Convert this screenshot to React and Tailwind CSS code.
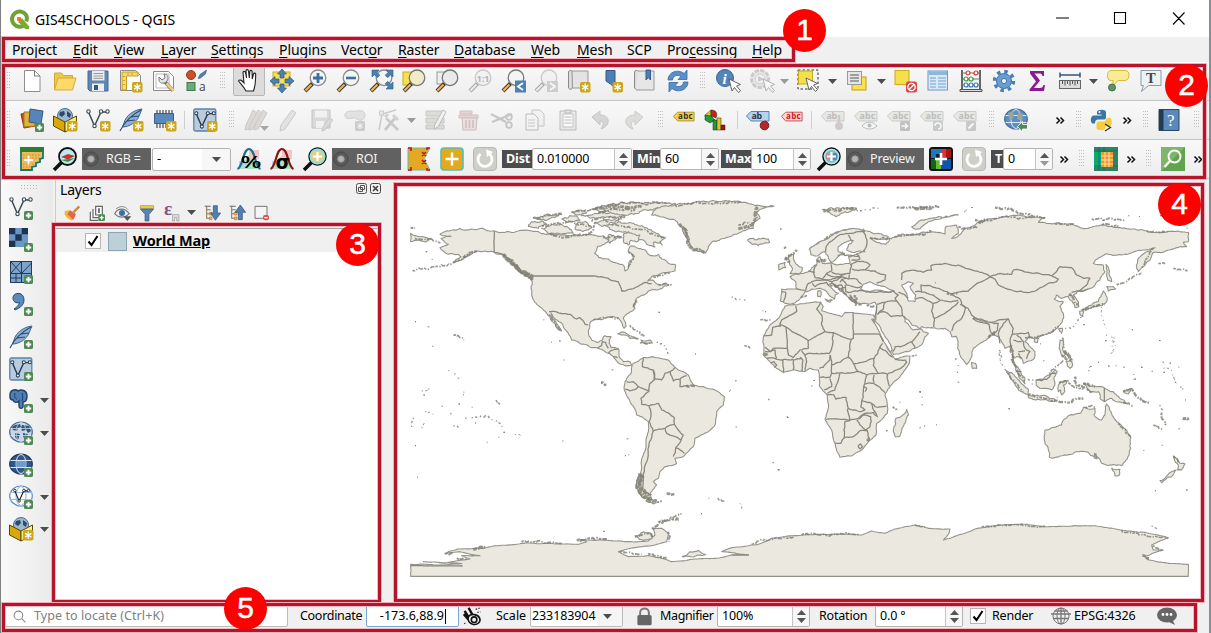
import React from "react";

/* ---------- shared pieces ---------- */
const I = ({ children, c = "size-6", o }) => (
  <svg viewBox="0 0 24 24" className={"shrink-0 overflow-visible " + c} fill="none" opacity={o}>{children}</svg>
);
const Cell = ({ w = "w-[33px]", children }) => <div className={"flex h-full shrink-0 items-center justify-center " + w}>{children}</div>;
const Grip = ({ w = "w-[16px]" }) => (
  <Cell w={w}>
    <svg viewBox="0 0 6 18" className="h-[18px] w-[6px]" fill="#c0c0c0">
      {[0, 3, 6, 9, 12, 15].map((y) => <g key={y}><rect x="0" y={y} width="1" height="1" /><rect x="2" y={y} width="1" height="1" /><rect x="4" y={y} width="1" height="1" /></g>)}
    </svg>
  </Cell>
);
const Sep = ({ w = "w-[7px]" }) => <Cell w={w}><div className="h-[18px] w-px bg-[#cfcfcf]" /></Cell>;
const Tri = ({ f = "#4d4d4d" }) => <svg viewBox="0 0 9 5" className="h-[5px] w-[9px] shrink-0"><path d="M0 0h9L4.500 5z" fill={f} /></svg>;
const More = ({ w = "w-[20px]" }) => (
  <Cell w={w}><svg viewBox="0 0 8 7" className="h-[7px] w-[8px] overflow-visible" fill="none" stroke="#111" strokeWidth="1.500"><path d="M.5 .5l3 3-3 3M4.500 .5l3 3-3 3" /></svg></Cell>
);
const Star = ({ x = 13, y = 13 }) => (
  <g transform={`translate(${x} ${y})`}><rect width="10.500" height="10.500" rx="1.800" fill="#cda61c" /><path d="M5.200 1.600v7.300M2 3.400l6.400 3.700M2 7.100l6.400-3.700" stroke="#fff" strokeWidth="1.300" /></g>
);
const Plus = ({ x = 15, y = 15 }) => (
  <g transform={`translate(${x} ${y})`}><rect width="9" height="9" rx="1.600" fill="#4f8a55" /><path d="M4.500 1.800v5.400M1.800 4.500h5.400" stroke="#fff" strokeWidth="1.900" /></g>
);
const Mag = ({ s = "#8b8b8b", f = "#f3f5f3", h = "#f0b050" }) => (
  <g><path d="M9.500 14.500L2 22" stroke="#333" strokeWidth="4" /><path d="M8.500 15.500L2.400 21.600" stroke={h} strokeWidth="2.200" /><circle cx="15" cy="8.800" r="7.800" fill={f} stroke={s} strokeWidth="1.300" /></g>
);
const Feather = () => (
  <g><path d="M23 1C15 2 7 7 5 15l-1.500 4C10 19 18 14 20 8z" fill="#8fb0d4" stroke="#3f6690" strokeWidth="1" /><path d="M22 2C14 6 5 14 1 23M8 13l8-1M12 9l8-1" stroke="#274a70" strokeWidth="1.100" /></g>
);
const Vee = ({ s = "#3a4a56" }) => (
  <g stroke={s} strokeWidth="1.500"><path d="M2.500 4l6 14 6.500-14h7" /><g fill="#fff" strokeWidth="1.100"><circle cx="2.500" cy="3.500" r="1.700" /><circle cx="8.500" cy="18" r="1.700" /><circle cx="15" cy="3.500" r="1.700" /><circle cx="21.500" cy="3.500" r="1.700" /></g></g>
);
const VeeBox = () => (
  <g><rect x=".8" y="1" width="22" height="22" rx="1.500" fill="#b9cbdc" stroke="#5b83ad" strokeWidth="1.300" /><g transform="translate(1 2) scale(.92)"><Vee s="#243a52" /></g></g>
);
const Box = () => (
  <g><circle cx="12" cy="8" r="7.500" fill="#9bb8d2" stroke="#4c6c8c" /><path d="M7 4l4-1 1 3-3 3-3-2zM14 3l4 3-1 4-3-2z" fill="#2e4a69" /><path d="M.5 8L12 14v10L.5 18z" fill="#d9a90c" stroke="#5c4700" /><path d="M12 14l11.500-6v10L12 24z" fill="#fdf07a" stroke="#5c4700" /></g>
);
const Globe = ({ f = "#86a8cc", s = "#466d96", land }) => (
  <g><ellipse cx="12" cy="11" rx="11.300" ry="10" fill={f} stroke={s} strokeWidth="1.200" />
    {land && <path d="M3 6l3-2 5-1 1 3-3 1-1 3-4-1zM13 4l7 1 2 5-3 2-2-3-4 1-1-3zM6 12l5 1-2 6-3-3zM14 12l5 1-3 6-2-4z" fill="#35577c" />}
    <g stroke="#dce8f2" strokeWidth="1" opacity={land ? 0.7 : 1}><ellipse cx="12" cy="11" rx="5" ry="9.500" /><path d="M1.500 7.500h21M1.500 14.500h21" /></g></g>
);
const Tag = ({ f = "#f5d14b", s = "#b09320", t = "abc", c = "#333" }) => (
  <g><path d="M.5 8L5 3.500h18v9.500H5z" fill={f} stroke={s} strokeWidth="1" /><text x="5.500" y="11" fontSize="8.800" fontWeight="700" fontFamily="Open Sans, sans-serif" fill={c} textLength={t.length * 5.300}>{t}</text></g>
);
const Arr = ({ r = 0, f = "#4a7fb5" }) => <path transform={`rotate(${r} 12 12)`} d="M12 0l4.500 5H14v4h-4V5H7.500z" fill={f} stroke="#2e5a8c" strokeWidth=".7" />;
const Reload = () => (
  <g><rect x=".5" y=".5" width="23" height="23" rx="3.500" fill="#cfcfc9" stroke="#b9b9b4" /><path d="M7.500 7a7 7 0 1 0 8 -.7" stroke="#fff" strokeWidth="2.800" /><path d="M13 2.500l7 2.500-6 5z" fill="#fff" /></g>
);
const Cursor = ({ x = 12, y = 10, f = "#fff", s = "#555" }) => <path transform={`translate(${x} ${y})`} d="M0 0l3 12 2.500-3.500 4 5 2-1.800-4-4.700 4-1.500z" fill={f} stroke={s} strokeWidth=".9" />;

/* ---------- toolbar rows ---------- */
const Row = ({ children }) => <div className="flex h-[39px] w-full shrink-0 items-center border-b border-[#c3c3c3] bg-gradient-to-b from-[#f9f9f9] to-[#ededed]">{children}</div>;

function RowOne() {
  return (
    <Row>
      <Grip w="w-[15px]" />
      <Cell><I><path d="M4.500 1.500h10l5.500 5.500v15.500h-15.500z" fill="#fff" stroke="#8f8f8f" /><path d="M14.500 1.500V7H20" stroke="#777" /></I></Cell>
      <Cell><I><path d="M1.500 21V4h7l2 2.500h9V10" fill="#eec94d" stroke="#d1a838" /><path d="M1.500 21L5 9h18l-3.500 12z" fill="#fcd96a" stroke="#d4aa3b" /></I></Cell>
      <Cell><I><path d="M2 2h20v20H4l-2-2z" fill="#5d87b5" stroke="#46688d" /><rect x="6" y="2" width="12.500" height="9.500" fill="#ececec" /><path d="M7.500 4.500h9.500M7.500 7h9.500M7.500 9.300h9.500" stroke="#999" /><rect x="6" y="14.500" width="12" height="7.500" fill="#eee" /><rect x="8" y="16" width="4" height="5" fill="#36587f" /></I></Cell>
      <Cell><I><path d="M1.500 1.500h15l5 5v15h-20z" fill="#fff" stroke="#8a8a8a" /><path d="M3 3h16v4H7.500v14H3z" fill="#f5db68" stroke="#c59c23" /><path d="M5 7v1M5 11v1M5 15v1M9 4.500v1M13 4.500v1" stroke="#8b6b00" /><Star /></I></Cell>
      <Cell><I><path d="M1.500 2.500h15l5 5v14h-20z" fill="#fff" stroke="#8a8a8a" /><path d="M4 5h13v14H4z" stroke="#bbb" /><path d="M13 13l8 8.500" stroke="#777" strokeWidth="4" /><path d="M14.500 14.500l7 7" stroke="#efcb7c" strokeWidth="2.800" /><path d="M7 8l3 3 3-2-1-4c4 0 5 4 3 7s-7 3-8-.5z" fill="#e5e5e5" stroke="#777" /></I></Cell>
      <Cell><I><circle cx="6" cy="6" r="4.500" fill="#c9502b" stroke="#9b3716" /><path d="M13 9.500l2-4 6.500-4.500-1 4-5 4z" fill="#4f7fb3" stroke="#36587f" strokeWidth=".6" /><rect x="2" y="13.500" width="8" height="8" fill="#6eaa7a" stroke="#3f7a4c" /><text x="14" y="22" fontSize="12" fill="#444" fontFamily="Open Sans, sans-serif">a</text></I></Cell>
      <Grip w="w-[19px]" />
      <Cell><div className="flex h-[30px] w-[32px] items-center justify-center rounded-[2px] border border-[#b8b8b8] bg-[#dcdcdc]"><I><path d="M9 22c-2-4-6-8-7.500-10 1-2 3-1 5.500 2L6 3.500C6 2 8 2 8.500 3.500L9.500 9 9 2c0-1.800 2.200-1.800 2.500 0l.8 7 .5-6.500c.2-1.600 2.200-1.500 2.300 0L15.200 10l1.300-5c.5-1.500 2.300-1 2.200.5-.3 5 .5 9-2.200 16.500z" fill="#fff" stroke="#222" strokeWidth="1.100" /></I></div></Cell>
      <Cell><I><rect x="3" y="3" width="17" height="14" fill="#f9e04f" stroke="#c7ab20" /><Arr /><Arr r={90} /><Arr r={180} /><Arr r={270} /></I></Cell>
      <Cell><I><Mag /><path d="M15 4v10M10 9h10" stroke="#3d6ea5" strokeWidth="2.800" /></I></Cell>
      <Cell><I><Mag /><path d="M10 9h10" stroke="#3d6ea5" strokeWidth="2.600" /></I></Cell>
      <Cell><I><Mag /><g fill="#4a7fb5" stroke="#2e5a8c" strokeWidth=".6"><path d="M3 1h7L7.800 3.200l3 3-2.500 2.500-3-3L3 8z" /><path d="M24 1h-7l2.200 2.200-3 3 2.500 2.500 3-3L24 8z" /><path d="M24 20h-7l2.200-2.200-3-3 2.500-2.500 3 3L24 13z" /></g></I></Cell>
      <Cell><I><rect x="1" y="3" width="12" height="13" fill="#f9e04f" stroke="#c7ab20" /><Mag f="#efeac8" s="#777" /></I></Cell>
      <Cell><I><rect x="2" y="3" width="12" height="12" fill="#eee" stroke="#999" /><Mag f="#e9ebe8" s="#777" /></I></Cell>
      <Cell><I o=".4"><Mag h="#ddd" f="#eee" s="#888" /><text x="8.500" y="12.500" fontSize="9.500" fontWeight="700" fill="#555" fontFamily="Open Sans, sans-serif" textLength="13">1:1</text></I></Cell>
      <Cell><I><Mag s="#777" /><rect x="14" y="11.500" width="11" height="12" fill="#4d80b4" /><path d="M22 14l-5 3.500 5 3.500" stroke="#fff" strokeWidth="1.800" /></I></Cell>
      <Cell><I o=".4"><Mag h="#ddd" f="#eee" /><rect x="13" y="12" width="11" height="11" fill="#999" /><path d="M16 14l5 3.500-5 3.500" stroke="#fff" strokeWidth="1.800" /></I></Cell>
      <Cell><I><path d="M2 2c2-1.500 4 0 3.500 2v14c0 3-4 3-4 0V3z" fill="#ddd" stroke="#888" /><path d="M5 2h16v17H5.500z" fill="#e3e3e3" stroke="#999" /><Star /></I></Cell>
      <Cell><I><path d="M6 1.500h9V19l-4.500-4L6 12z" fill="#4d7fb4" stroke="#315b8a" /><Star x={12.500} /></I></Cell>
      <Cell><I><path d="M2 2c2-1.500 4 0 3.500 2v14c0 3-4 3-4 0V3z" fill="#ddd" stroke="#888" /><path d="M5 2h16v19H3" fill="#e6e6e6" stroke="#999" /><path d="M13 1h4.500v10l-2.200-2.500L13 11z" fill="#4d7fb4" stroke="#315b8a" /></I></Cell>
      <Cell><I><path d="M2 11C2 3 12-.5 18 4.500L21 1v9.500h-9l3-3C11 5 7 7 6.500 11zM22 13c0 8-10 11.500-16 6.500L3 23v-9.500h9l-3 3c4 2.500 8 .500 8.500-3.500z" fill="#5a8fca" stroke="#3869a3" strokeWidth=".8" /></I></Cell>
      <Grip w="w-[17px]" />
      <Cell><I><circle cx="9" cy="9" r="8.500" fill="#5584b6" stroke="#3a679b" /><text x="6.500" y="14.500" fontSize="15" fontStyle="italic" fontWeight="700" fill="#fff" fontFamily="Liberation Serif, serif">i</text><Cursor x={13} /></I></Cell>
      <Cell><I o=".45"><circle cx="11" cy="10" r="8.500" fill="#ddd" stroke="#999" strokeWidth="3" strokeDasharray="4.500 1.200" /><circle cx="11" cy="10" r="5" fill="#eee" stroke="#999" /><path d="M9 7l6 3-6 3z" fill="#999" /><Cursor x={14} /></I></Cell>
      <Cell w="w-[14px]"><Tri f="#999" /></Cell>
      <Cell w="w-[35px]"><I><rect x="1" y="1" width="20" height="19" stroke="#333" strokeDasharray="2.500 2" /><rect x="1.500" y="2" width="14" height="13" fill="#f6df4c" stroke="#c7ab20" /><Cursor x={9} y={9} /></I></Cell>
      <Cell w="w-[13px]"><Tri /></Cell>
      <Cell w="w-[36px]"><I><rect x="7" y="8" width="14" height="13" fill="#f9e04f" stroke="#c0a017" /><rect x="2.500" y="2.500" width="14" height="13" fill="#e6e6e6" stroke="#999" /><path d="M5 6h9M5 9h9M5 12h9" stroke="#888" strokeWidth="1.300" /></I></Cell>
      <Cell w="w-[12px]"><Tri /></Cell>
      <Cell w="w-[35px]"><I><rect x="2" y="1.500" width="14" height="14" fill="#f6df4c" stroke="#c7ab20" /><rect x="13" y="12.500" width="11" height="11" rx="2" fill="#d14b4b" /><circle cx="18.500" cy="18" r="3.700" stroke="#fff" strokeWidth="1.300" /><path d="M16 20.500l5-5" stroke="#fff" strokeWidth="1.300" /></I></Cell>
      <Cell w="w-[32px]"><I><rect x="2" y="2" width="19.500" height="19" fill="#dbe9f6" stroke="#6d98c4" /><rect x="2.500" y="2.500" width="18.500" height="3.500" fill="#8db7df" /><path d="M4 9h6M4 12h6M4 15h6M4 18h6M12 9h8M12 12h8M12 15h8M12 18h8" stroke="#6d9fd0" strokeWidth="1.200" /></I></Cell>
      <Cell w="w-[34px]"><I><path d="M3 1v21M21 1v21" stroke="#444" strokeWidth="1.600" /><path d="M3 4h18M3 10h18M3 16h18" stroke="#777" /><path d="M1 20.500h22v2H1z" fill="#ddd" stroke="#555" /><g fill="#fff" strokeWidth="1.200"><g stroke="#d33"><circle cx="9" cy="4" r="2" /><circle cx="17" cy="4" r="2" /></g><g stroke="#3a9a3a"><circle cx="7" cy="10" r="2" /><circle cx="12" cy="10" r="2" /></g><g stroke="#3a76b8"><circle cx="7" cy="16" r="2" /><circle cx="12" cy="16" r="2" /><circle cx="17" cy="16" r="2" /></g></g></I></Cell>
      <Cell w="w-[32px]"><I><circle cx="12" cy="12" r="9.500" stroke="#4a80b8" strokeWidth="3.500" strokeDasharray="3.500 3.960" /><circle cx="12" cy="12" r="7.500" fill="#6b9dd0" stroke="#3e74ac" /><circle cx="12" cy="12" r="2.600" fill="#eef3f8" stroke="#3e74ac" /></I></Cell>
      <Cell w="w-[34px]"><I><path d="M5 2h14v5h-1.500c-.5-2-1.500-2.500-3-2.500H9.500l5.500 7-6 7.500h6c2 0 3-1 3.500-3H20l-1 6H4.500v-1.500l6.500-8-6-8z" fill="#8a1a8f" /></I></Cell>
      <Cell w="w-[32px]"><I><path d="M2 6h20M2 3.500v5M22 3.500v5" stroke="#35577c" strokeWidth="1.500" /><rect x="1.500" y="11.500" width="21" height="8" fill="#ddd" stroke="#666" /><path d="M4.500 12v3M7 12v4.500M9.500 12v3M12 12v4.500M14.500 12v3M17 12v4.500M19.500 12v3" stroke="#555" /></I></Cell>
      <Cell w="w-[14px]"><Tri /></Cell>
      <Cell w="w-[35px]"><I><path d="M5 1.500h14c3 0 4 2 4 4.500s-1 5.500-4 5.500h-7L7 17v-5.500H5C2 11.500 1.500 9 1.500 6.500s1-5 3.500-5z" fill="#faeb96" stroke="#d8b93c" /><circle cx="6" cy="18.500" r="3.500" fill="#5f9268" stroke="#41724b" /></I></Cell>
      <Cell w="w-[32px]"><I><path d="M2 1.500h20v15H9.500l-7 6 2-6H2z" fill="#edf2f5" stroke="#8d9aa3" /><text x="7" y="14" fontSize="14.500" fontWeight="700" fill="#444" fontFamily="Liberation Serif, serif">T</text></I></Cell>
    </Row>
  );
}

function RowTwo() {
  return (
    <Row>
      <Grip w="w-[15px]" />
      <Cell><I><path d="M1 6l11-2 3 14-11 2z" fill="#c2522c" stroke="#8d3413" /><path d="M4 4l12 0-1 14-11 1z" fill="#e3b23a" stroke="#a6781b" /><path d="M10 1l13 2-2 13-12-2z" fill="#5486b9" stroke="#36587f" /><Plus /></I></Cell>
      <Cell><I><Box /><Star x={14} /></I></Cell>
      <Cell><I><Vee /><Star x={14} /></I></Cell>
      <Cell><I><Feather /><Star x={14} /></I></Cell>
      <Cell><I><path d="M5 2v18M8 2v18M11 2v18M14 2v18M17 2v18M20 2v18" stroke="#4a4a4a" strokeWidth="1.200" /><path d="M2.500 5.500h19v10h-19z" fill="#5989bc" stroke="#35608e" /><Star x={14} /></I></Cell>
      <Sep w="w-[8px]" />
      <Cell w="w-[34px]"><I><VeeBox /><Star x={14} /></I></Cell>
      <Grip w="w-[20px]" />
      <Cell w="w-[28px]"><I o=".6"><g fill="#cbc6c2" stroke="#b3afab"><path d="M9 2l4 3L5 21l-4 1 1-5z" /><path d="M14 2l4 3-9 16-4 1 1-5z" /><path d="M19 2l4 3-9 16-4 1 1-5z" /></g><path d="M16 18h9l-4.500 5z" fill="#777" /></I></Cell>
      <Cell w="w-[35px]"><I o=".55"><path d="M16 2l4 3L9 21l-5 2 1-6z" fill="#d6d4d0" stroke="#a8a8a8" /></I></Cell>
      <Cell><I o=".45"><path d="M2 2h18v18H2z" fill="#bbb" stroke="#888" /><rect x="5" y="2.500" width="12" height="7" fill="#eee" /><rect x="6" y="13" width="8" height="7" fill="#eee" /><path d="M19 10l4 2-8 10-3 1 1-4z" fill="#bbb" stroke="#999" /></I></Cell>
      <Cell><I o=".5"><path d="M2 6c3-5 8-2 12-3s8 0 8 4-3 6-6 5-4-3-7-2-8 1-7-4z" fill="#d0d0d0" stroke="#aaa" /><rect x="12" y="13" width="10" height="10" rx="1.500" fill="#aaa" /><path d="M17 15v6M14.500 16.500l5 3M14.500 19.500l5-3" stroke="#fff" /></I></Cell>
      <Cell><I o=".45"><path d="M3 22L6 6 20 2" stroke="#999" strokeWidth="1.500" /><rect x="3.500" y="3" width="4" height="4" fill="#ddd" stroke="#999" /><path d="M10 10l12 12M20 9L9 22" stroke="#999" strokeWidth="2.800" /><path d="M9 9l3-3M17 7l5 5" stroke="#aaa" strokeWidth="3" /></I></Cell>
      <Cell w="w-[15px]"><Tri f="#999" /></Cell>
      <Cell w="w-[34px]"><I o=".5"><path d="M2 3h18v5H2zM2 10h18v5H2zM2 17h18v4H2z" fill="#c6c6b9" stroke="#999" /><path d="M19 2l3 2-8 15-4 2 1-5z" fill="#eee" stroke="#888" /></I></Cell>
      <Cell w="w-[32px]"><I o=".5"><path d="M3 3h12v3H3zM2 7h19v3H2z" fill="#d5b8b5" stroke="#b08f8c" /><path d="M5 10h15l-1 12H6z" fill="#e6cfcd" stroke="#ab8a88" /><path d="M9 12v8M12.500 12v8M16 12v8" stroke="#ab8a88" strokeWidth="1.500" /></I></Cell>
      <Cell w="w-[34px]"><I o=".5"><path d="M1 6l15 8M2 14l20-8" stroke="#999" strokeWidth="2" /><circle cx="19" cy="9" r="2.800" stroke="#999" strokeWidth="1.800" /><circle cx="19" cy="17" r="2.800" stroke="#999" strokeWidth="1.800" /></I></Cell>
      <Cell w="w-[32px]"><I o=".5"><path d="M9 2h8l4 4v12H9z" fill="#eee" stroke="#999" /><path d="M3 6h8l4 4v12H3z" fill="#f4f4f4" stroke="#888" /><path d="M5 12h7M5 15h7M5 18h7" stroke="#999" /></I></Cell>
      <Cell w="w-[34px]"><I o=".5"><path d="M4 3h16v19H4z" fill="#ddd" stroke="#888" /><path d="M7 6h10v13H7z" fill="#fff" stroke="#999" /><path d="M8.500 9h7M8.500 12h7M8.500 15h7M9 2h6v3H9z" stroke="#888" fill="#ccc" /></I></Cell>
      <Cell w="w-[32px]"><I o=".5"><path d="M3 9l8-6v4c6 0 9 3 8 8-1 3-4 5-7 6 3-5 3-8-1-8v4z" fill="#b9b9b9" stroke="#999" /></I></Cell>
      <Cell w="w-[34px]"><I o=".5"><path d="M21 9l-8-6v4c-6 0-10 3-9 8 1 3 4 5 7 6-3-5-2-8 2-8v4z" fill="#c6c9c2" stroke="#a2a59e" /></I></Cell>
      <Grip w="w-[20px]" />
      <Cell w="w-[26px]"><I c="size-[22px]"><Tag /></I></Cell>
      <Cell w="w-[37px]"><I><path d="M1 7l6-5v9l-5 1z" fill="#e8c21c" stroke="#333" strokeWidth=".5" /><path d="M1 7l6 1 4 4-5 3-5-3z" fill="#1f9d3d" stroke="#222" strokeWidth=".5" /><path d="M7 2c5 0 7 3 5 8L7 8z" fill="#c52517" stroke="#222" strokeWidth=".5" /><path d="M9 12h4v10H9z" fill="#1f9d3d" stroke="#222" strokeWidth=".5" /><path d="M13 10h4v12h-4z" fill="#e8c21c" stroke="#222" strokeWidth=".5" /><path d="M17 17h4v5h-4z" fill="#a11" stroke="#222" strokeWidth=".5" /></I></Cell>
      <Sep />
      <Cell w="w-[34px]"><I><Tag f="#b5d3f2" s="#4f87c2" t="ab" /><path d="M17.500 8v8" stroke="#ccc" strokeWidth="2" /><circle cx="18.500" cy="17.500" r="4.300" fill="#b3282d" stroke="#7a1518" /></I></Cell>
      <Cell w="w-[33px]"><I c="size-[22px]"><Tag f="#fbd6d6" s="#d64343" c="#c02020" /></I></Cell>
      <Sep />
      <Cell w="w-[35px]"><I o=".45"><Tag f="#d8d8cf" s="#999" t="ab" c="#777" /><path d="M18 7v9" stroke="#999" strokeWidth="2.500" /><circle cx="18" cy="18" r="4" fill="#a99" /></I></Cell>
      <Cell w="w-[32px]"><I o=".45"><Tag f="#d8d8cf" s="#999" c="#777" /><path d="M8 18c4-5 11-5 15 0-4 4-11 4-15 0z" fill="#fff" stroke="#777" /><circle cx="15.500" cy="17.500" r="2" fill="#777" /></I></Cell>
      <Cell w="w-[34px]"><I o=".45"><Tag f="#d8d8cf" s="#999" c="#777" /><rect x="13" y="13" width="10" height="10" rx="1.500" fill="#888" /><path d="M14.500 18h6M18 15.500l2.500 2.500-2.500 2.500" stroke="#fff" strokeWidth="1.500" /></I></Cell>
      <Cell w="w-[32px]"><I o=".45"><Tag f="#d8d8cf" s="#999" c="#777" /><rect x="13" y="13" width="10" height="10" rx="1.500" fill="#999" /><path d="M15 18a3 3 0 1 1 3 3" stroke="#fff" strokeWidth="1.500" /></I></Cell>
      <Cell w="w-[34px]"><I o=".45"><Tag f="#d8d8cf" s="#999" c="#777" /><rect x="13" y="13" width="10" height="10" rx="1.500" fill="#999" /><path d="M15.500 20.500l5-5" stroke="#fff" strokeWidth="2" /></I></Cell>
      <Grip w="w-[20px]" />
      <Cell w="w-[28px]"><I><Globe f="#5e8fc4" /><path d="M4 5l5-2 1 5-4 6zM14 4l5 2-1 7-5-2z" fill="#9ba59a" /><path d="M13.500 18.500l5-5v3h5v4.500h-5v3z" fill="#4f8a55" stroke="#fff" strokeWidth=".8" /></I></Cell>
      <Cell w="w-[20px]" />
      <More />
      <Grip w="w-[18px]" />
      <Cell w="w-[28px]"><I><path d="M7 11.500V4c0-3 9-3 9 0v5.500c0 1.500-1 2-2.500 2H8c-2 0-3 1.500-3 4H3c-3 0-3-8 1-8h7.500V6.500H7" fill="#3b76a8" /><circle cx="9.500" cy="4" r="1" fill="#fff" /><path d="M16 11c0 2-1.500 2.500-3 2.500H9c-1.500 0-2.500 1-2.500 2.500v4c0 3 9 3 9 0v-1.500h4c3 0 3-9 0-9z" fill="#f5cd3c" /><path d="M15 16l5.500 3.500-5.500 3.500" stroke="#333" strokeWidth="1.300" /></I></Cell>
      <More w="w-[22px]" />
      <Grip />
      <Cell w="w-[30px]"><I><path d="M2 1.500h20v21H2z" fill="#5a89bd" stroke="#2d4763" /><path d="M2 1.500h4.500v21H2z" fill="#25394f" /><text x="10" y="18" fontSize="17" fontFamily="Liberation Serif, serif" fill="#fff">?</text></I></Cell>
      <Cell w="w-[5px]" />
      <Grip />
    </Row>
  );
}

const Dark = ({ w, children }) => (
  <div className={"flex h-[22px] shrink-0 items-center bg-[#616161] font-['Noto_Sans'] text-[12.500px] text-[#f4f4f4] " + w}>
    <svg viewBox="0 0 17 17" className="ml-[1px] size-[16px]"><circle cx="8.500" cy="8.500" r="7.500" fill="#5a5a5a" stroke="#484848" /><circle cx="8.500" cy="8.500" r="3.500" fill="#b4b4b4" stroke="#909090" /></svg>
    <span className="ml-[7px] whitespace-nowrap tracking-[-0.1px]">{children}</span>
  </div>
);
const Lbl = ({ w, children }) => <div className={"flex h-[18px] shrink-0 items-center overflow-hidden bg-[#4c4c4c] pl-[4px] font-['Noto_Sans'] text-[12.500px] font-bold tracking-[-0.1px] text-white " + w}>{children}</div>;
const Spin = ({ w, h = "h-[22px]", children, dim }) => (
  <div className={"flex shrink-0 items-stretch rounded-[2px] border border-[#b3b3b3] bg-white " + w + " " + h}>
    <span className="flex flex-1 items-center pl-[4px] font-['Noto_Sans'] text-[12.500px] tracking-[-0.15px] text-black">{children}</span>
    <span className="flex w-[17px] flex-col items-center justify-center gap-[3px] border-l border-[#c4c4c4] bg-[#f7f7f7]">
      <svg viewBox="0 0 9 5" className="h-[5px] w-[9px]"><path d="M0 5h9L4.500 0z" fill="#555" /></svg>
      <Tri f={dim ? "#999" : "#555"} />
    </span>
  </div>
);
const Curve = ({ c, t }) => (
  <I>
    <path d="M1 22L12 8l11 14z" fill="#a9e3c4" /><path d="M12 3l10 0v9L12 13z" fill="#f3c4c4" /><path d="M2 14h6v6H2z" fill="#bcd3f3" />
    <path d="M.5 22C6 20 6 2 12 2s6 18 11.500 20" stroke={c} strokeWidth="2.200" />
    {t === "%" ? <text x="4" y="21" fontSize="17" fontWeight="700" fontFamily="Liberation Sans, sans-serif" fill="#000" textLength="20" lengthAdjust="spacingAndGlyphs">%</text> : <text x="5.500" y="21.500" fontSize="19" fontWeight="700" fontFamily="DejaVu Sans, sans-serif" fill="#000">σ</text>}
  </I>
);

function RowThree() {
  return (
    <Row>
      <Grip w="w-[15px]" />
      <Cell><I><path d="M1 1h22v10l-3 1v3l-4 1v3l-4 1v3H1z" fill="#f0b95b" stroke="#14786f" strokeWidth="1.800" /><path d="M0 0h24v5H0z" fill="#2e7d32" /><path d="M3 8h18M3 11h16M3 17h11M3 20h8" stroke="#c98827" strokeDasharray="1.500 1.500" /><path d="M8.500 8.500v9M4 13h9" stroke="#fff" strokeWidth="1.800" /></I></Cell>
      <Cell w="w-[34px]"><I><path d="M9 15l-8 8" stroke="#111" strokeWidth="3.500" /><circle cx="14.500" cy="9.500" r="8.500" fill="#bfe9ee" stroke="#111" strokeWidth="1.800" /><path d="M8 10l7-3 7 2-7 3.500z" fill="#c0392b" /><path d="M8 13l7 2 7-4-7 1z" fill="#3c8f4c" /></I></Cell>
      <Dark w="w-[69px]">RGB =</Dark>
      <div className="ml-px flex h-[23px] w-[79px] shrink-0 items-center justify-between rounded-[2px] border border-[#b3b3b3] bg-white pl-[4px] text-[13px]"><span>-</span><span className="flex h-full w-[28px] items-center justify-center bg-[#f7f7f7]"><Tri /></span></div>
      <Cell w="w-[36px]"><Curve c="#1c6f8c" t="%" /></Cell>
      <Cell w="w-[30px]"><Curve c="#8e1313" t="σ" /></Cell>
      <Cell w="w-[35px]"><I><path d="M9 15l-8 8" stroke="#111" strokeWidth="3.500" /><circle cx="14.500" cy="9.500" r="8.500" fill="#e2d080" stroke="#111" strokeWidth="1.500" /><circle cx="14.500" cy="9.500" r="7" stroke="#8fe0dd" strokeWidth="2" /><path d="M14.500 5v9M10 9.500h9" stroke="#fff" strokeWidth="2" /></I></Cell>
      <Dark w="w-[69px]">ROI</Dark>
      <Cell w="w-[36px]"><I><path d="M1 1h22l-6 11 6 11H1z" fill="#e5a823" stroke="#6bb9a3" /><path d="M1 1h3v3M23 1h-3v2M1 23h3v-3M23 23h-3v-2M15 5l4 4M19 5l-4 4M15 13l4 4M19 13l-4 4" stroke="#c01515" strokeWidth="1.600" /></I></Cell>
      <Cell w="w-[30px]"><I><rect x="1" y="1" width="22" height="22" rx="3" fill="#e3aa1e" stroke="#57bdb8" strokeWidth="1.600" /><path d="M12 5.500v13M5.500 12h13" stroke="#fff" strokeWidth="2.400" /></I></Cell>
      <Cell w="w-[35px]"><I><Reload /></I></Cell>
      <Lbl w="w-[30px]">Dist</Lbl>
      <Spin w="w-[100px]">0.010000</Spin>
      <div className="w-px" />
      <Lbl w="w-[27px]">Min</Lbl>
      <Spin w="w-[59px]">60</Spin>
      <div className="w-[2px]" />
      <Lbl w="w-[30px]">Max</Lbl>
      <Spin w="w-[60px]">100</Spin>
      <Cell w="w-[35px]"><I><path d="M9 15l-8 8" stroke="#111" strokeWidth="3.500" /><circle cx="14.500" cy="9.500" r="8.500" fill="#7fb9c9" stroke="#111" strokeWidth="1.500" /><path d="M8 6h6v6H8z" fill="#c98d8d" /><path d="M15 6h6v7h-6z" fill="#5389b9" /><circle cx="14.500" cy="9.500" r="7" stroke="#a8e8e6" strokeWidth="1.600" /><path d="M14.500 5v9M10 9.500h9" stroke="#fff" strokeWidth="2.200" /></I></Cell>
      <Dark w="w-[78px]">Preview</Dark>
      <Cell w="w-[34px]"><I><rect x="1" y="1" width="22" height="22" rx="2.500" fill="#123" stroke="#111" strokeWidth="2" /><path d="M2 2h5v9H2zM7 2h5v5H7z" fill="#27b" /><path d="M12 2h5v9h-5z" fill="#d33" /><path d="M17 2h5v9h-5z" fill="#a11" /><path d="M2 12h5v10H2z" fill="#161" /><path d="M7 12h5v10H7z" fill="#6b3" /><path d="M12 12h10v10H12z" fill="#15a" /><path d="M12 6v12M6 12h12" stroke="#fff" strokeWidth="2.600" /></I></Cell>
      <Cell w="w-[32px]"><I><Reload /></I></Cell>
      <div className="w-px" />
      <Lbl w="w-[12px]">T</Lbl>
      <Spin w="w-[50px]" dim>0</Spin>
      <More w="w-[22px]" />
      <Grip w="w-[14px]" />
      <Cell w="w-[34px]"><I><rect width="24" height="24" fill="#0fa678" /><path d="M19 0h5v24h-5zM0 0h24v5H0zM0 20h24v4H0z" fill="#3d6e5a" opacity=".6" /><path d="M5 0v24M10 0v24M0 4h24M0 19h24" stroke="#0b6b57" strokeWidth=".7" /><rect x="7" y="5" width="12" height="15" fill="#f3952c" /><path d="M11 5v15M15 5v15M7 9h12M7 13h12M7 17h12" stroke="#fbe2a3" /></I></Cell>
      <More w="w-[16px]" />
      <Grip w="w-[20px]" />
      <Cell w="w-[28px]"><I><rect width="24" height="24" fill="#62a34e" /><path d="M0 24L24 0H0z" fill="#7db76a" /><circle cx="13.500" cy="9.500" r="6" stroke="#fff" strokeWidth="1.900" /><path d="M9 14l-5.500 6" stroke="#fff" strokeWidth="2.300" /></I></Cell>
      <More w="w-[21px]" />
    </Row>
  );
}

/* ---------- left side toolbar ---------- */
function SideBar() {
  const items = [
    [<><Vee /><Plus /></>],
    [<><rect x="0" y="0" width="19" height="19" fill="#6a96c7" /><path d="M0 0h6.300v6.300H0zM12.700 0H19v6.300h-6.300zM6.300 6.300h6.400v6.400H6.300zM0 12.700h6.300V19H0z" fill="#1c3450" /><Plus /></>],
    [<><rect x="1.500" y="1.500" width="21" height="21" fill="#7ea3cb" stroke="#223b58" /><path d="M1.500 13.500h21M12.500 1.500v21M1.500 1.500l11 12M12.500 1.500l-11 12M22.500 3l-10 10.500M1.500 18h11M7 13.500v9" stroke="#223b58" /><Plus /></>],
    [<><path d="M4 6c0-6 11-7 11 2 0 5-4 8-9 10l-1-1c3-2 5-4 5.500-6.500C7 11.500 4 10 4 6z" fill="#5b8abb" stroke="#264a72" /><Plus /></>],
    [<><Feather /><Plus /></>],
    [<><VeeBox /><Plus /></>],
    [<><path d="M1 8C0 0 7 0 9 2c3-2 9-1 9 5 0 4-2 6-4 6v5c-1 2-4 2-4-1v-5c-2 2-5 2-6-1-2 0-3-1-3-3z" fill="#4d7fb4" stroke="#203f63" strokeWidth="1.400" /><path d="M6 4c-1 3 0 6 2 6M13 4c1 3 1 5 0 8" stroke="#203f63" /><Plus /></>, true],
    [<><Globe f="#c3d5e6" land /><Plus /></>, true],
    [<><Globe f="#2f578a" s="#1e3c60" /><path d="M7.500 8h9v6h-9z" fill="#6d9bcb" /><Plus /></>],
    [<><Globe f="#fff" s="#5f8fc2" /><path d="M1.500 7.500h21M1.500 14.500h21" stroke="#9bb9d8" /><ellipse cx="12" cy="11" rx="5" ry="9.500" stroke="#9bb9d8" /><g transform="translate(4 3) scale(.72)"><Vee s="#111" /></g><Plus /></>, true],
    [<><Box /><Star x={14} /></>, true],
  ];
  return (
    <div className="flex w-[53px] shrink-0 flex-col bg-gradient-to-r from-[#f9f9f9] to-[#eaeaea]">
      <div className="flex h-[13px] justify-center pl-[7px] pt-[6px]">
        <svg viewBox="0 0 18 5" className="h-[5px] w-[18px]" fill="#b4b4b4">{[0, 3, 6, 9, 12, 15].map((x) => <g key={x}><rect x={x} y="0" width="1" height="1" /><rect x={x} y="3" width="1" height="1" /></g>)}</svg>
      </div>
      {items.map(([ic, arrow], i) => (
        <div key={i} className="flex h-[32.150px] items-center pl-[9px]"><I>{ic}</I>{arrow && <span className="ml-[7px]"><Tri /></span>}</div>
      ))}
    </div>
  );
}

/* ---------- layers panel ---------- */
const Check = () => <span className="flex size-[16px] shrink-0 items-center justify-center border border-[#b5b5b5] bg-white"><svg viewBox="0 0 12 12" className="size-[12px]" fill="none" stroke="#000" strokeWidth="2"><path d="M1.500 6.500L4.500 10 10.500 1" /></svg></span>;
const S = ({ children, w = "w-[25px]" }) => <Cell w={w}><I c="size-[16px]">{children}</I></Cell>;
function Layers() {
  return (
    <div className="flex w-[337px] shrink-0 flex-col bg-[#f0f0f0] pl-[2px]">
      <div className="flex h-[21px] items-center justify-between border-l border-[#ccc] pl-[4px] pr-[9px]">
        <span className="font-['Noto_Sans'] text-[14px] tracking-[-0.2px] text-black">Layers</span>
        <span className="mb-[2px] flex gap-[3px]">
          <svg viewBox="0 0 11 11" className="size-[11px]" fill="none" stroke="#555"><rect x=".5" y=".5" width="10" height="10" rx="2" /><path d="M4.500 2.500h4v4h-4zM2.500 4.500h4v4h-4z" /></svg>
          <svg viewBox="0 0 11 11" className="size-[11px]" fill="none" stroke="#444"><rect x=".5" y=".5" width="10" height="10" rx="2" /><path d="M3 3l5 5M8 3l-5 5" strokeWidth="1.700" /></svg>
        </span>
      </div>
      <div className="flex h-[25px] items-center border-l border-[#ccc] pl-[3px]">
        <S><path d="M23 2l-9 9" stroke="#c98c4a" strokeWidth="3.500" /><path d="M1 9l7-1 9 5-4 10c-5 0-10-4-12-9z" fill="#f0b92e" /><path d="M9 8l9 6-4 8-9-8z" fill="#e0664c" /></S>
        <S><path d="M2 10v13h12M6 6v13h13M10 2h10v13H10z" fill="#fff" stroke="#666" strokeWidth="1.800" /><path d="M15 5v7" stroke="#333" strokeWidth="2" /><rect x="14" y="14" width="10" height="10" rx="2" fill="#4f8a55" /><path d="M19 16v6M16 19h6" stroke="#fff" strokeWidth="2" /></S>
        <S><path d="M1 13C6 4 16 4 23 13c-7 7-16 7-22 0z" fill="#eef" stroke="#777" strokeWidth="1.800" /><circle cx="12" cy="12" r="4.500" fill="#3a6ea5" /><path d="M3 6c6-5 13-5 18 1" stroke="#888" strokeWidth="1.500" /><path d="M14 17h12l-6 7z" fill="#555" /></S>
        <S><path d="M2 1h20v4H2z" fill="#f2d44b" stroke="#a98f18" /><path d="M2 6h20l-7 8v10H9V14z" fill="#5585b8" stroke="#36587f" /></S>
        <Cell w="w-[26px]"><I c="size-[17px]"><text x="0" y="15" fontSize="27" fontWeight="700" fontFamily="Liberation Serif, serif" fill="#7b5a86">ε</text><path d="M12 24v-9h9v9h-3v-5h-3v5z" fill="#ddd" stroke="#999" /></I></Cell>
        <Cell w="w-[12px]"><Tri /></Cell>
        <S w="w-[30px]"><path d="M4 1v19h5M4 7h6M4 13h4" stroke="#8a7a55" strokeWidth="1.600" /><path d="M1 2h9" stroke="#888" strokeWidth="2" /><path d="M8 11h4v4H8zM8 18h4v4H8z" fill="#f0b560" stroke="#b97a1c" /><path d="M14 1h6v11h5l-8 11-7-11h4z" fill="#4f80b5" stroke="#2b4f78" /></S>
        <S w="w-[20px]"><path d="M4 1v19h5M4 7h6M4 13h4" stroke="#8a7a55" strokeWidth="1.600" /><path d="M1 2h9" stroke="#888" strokeWidth="2" /><path d="M8 11h4v4H8zM8 18h4v4H8z" fill="#f0b560" stroke="#b97a1c" /><path d="M14 22h6V11h5L17 0l-8 11h5z" fill="#4f80b5" stroke="#2b4f78" /></S>
        <S w="w-[28px]"><path d="M3 2h18v18H3z" fill="#f4f4f4" stroke="#777" strokeWidth="1.500" /><rect x="15" y="15" width="9" height="8" rx="3" fill="#d9534f" /><path d="M17 19h5" stroke="#fff" strokeWidth="2" /></S>
      </div>
      <div className="mt-[3px] h-[372px] w-[325px] border border-[#a5a5a5] bg-white">
        <div className="flex h-[23px] items-center bg-[#f0f0f0] pl-[29px] pt-px">
          <Check />
          <span className="ml-[7px] size-[19px] border border-[#8ba6b0] bg-[#bdd0da]" />
          <span className="ml-[6px] whitespace-nowrap font-['Noto_Sans'] text-[14.500px] font-bold tracking-[-0.100px] text-black underline">World Map</span>
        </div>
      </div>
    </div>
  );
}

/* ---------- world map ---------- */
const parse = (s) => s.trim().split(/\s+/).map((p) => p.split(",").map(Number));
function rough(s, close, amp = 0.13) {
  const pts = parse(s);
  if (close) pts.push(pts[0]);
  const out = [pts[0]];
  const sub = (a, b) => {
    const dx = b[0] - a[0], dy = b[1] - a[1], len = Math.hypot(dx, dy);
    if (len < 7 || len > 900) { out.push(b); return; }
    const h = Math.sin(a[0] * 12.9898 + a[1] * 78.233 + b[0] * 37.7) * 43758.5453;
    const r = (h - Math.floor(h) - 0.5) * 2 * Math.min(amp, 3.5 / len);
    const m = [(a[0] + b[0]) / 2 - dy * r, (a[1] + b[1]) / 2 + dx * r];
    sub(a, m); sub(m, b);
  };
  for (let i = 1; i < pts.length; i++) sub(pts[i - 1], pts[i]);
  return "M" + out.map((p) => p[0].toFixed(1) + "," + p[1].toFixed(1)).join("L") + (close ? "Z" : "");
}
const Land = ({ p, a }) => <path d={rough(p, true, a)} />;
const Sea = ({ p }) => <path d={rough(p, true, 0.08)} fill="#fff" />;
const Line = ({ p, a = 0.1 }) => <path d={rough(p, false, a)} fill="none" stroke="#88877c" strokeWidth="3.800" />;
const Rag = ({ p, w = 6 }) => <path d={rough(p, false, 0.3)} fill="none" stroke="#807f74" strokeWidth={w} strokeDasharray={w > 7 ? "11 3 17 2 6 2" : w > 4 ? "8 3 14 5 4 4" : "4 7 7 9 3 12"} opacity=".82" />;
const Dots = ({ p }) => <g fill="#85857b" stroke="none">{parse(p).map(([x, y], i) => <rect key={i} x={x} y={y} width={i % 3 ? 3 : 5} height={i % 2 ? 3 : 4} />)}</g>;
const G = ({ x, y, children }) => <g transform={`translate(${x} ${y}) scale(.33333)`}>{children}</g>;

function WorldMap() {
  return (
    <svg viewBox="390 179 821 425" className="h-[425px] w-[821px]" fill="#ebe9df" stroke="#94938a" strokeWidth="3.300" strokeLinejoin="round">
      <rect x="395" y="184" width="809" height="418" fill="#fff" stroke="none" />
      <G x={395} y={185}>
        <Land p="165,137 195,130 240,134 298,138 330,142 370,138 400,136 430,140 470,150 515,152 560,152 600,150 625,152 645,165 628,178 608,184 599,205 612,218 640,222 662,233 682,238 690,258 700,250 703,230 715,222 712,210 700,200 706,183 730,190 752,196 765,212 790,208 800,222 820,235 842,240 840,258 800,265 775,272 758,288 775,286 790,300 812,294 822,300 795,312 765,316 755,325 738,332 722,345 715,362 720,370 700,385 685,400 693,424 687,430 678,410 670,398 640,396 625,402 600,402 585,412 580,440 590,465 610,472 622,465 630,452 648,455 642,475 648,488 670,490 672,515 685,530 705,530 712,540 700,542 680,538 665,528 655,515 640,505 615,492 590,488 560,478 530,465 520,445 505,425 485,405 468,384 474,402 492,424 500,438 488,432 470,408 456,386 445,375 425,358 410,330 408,305 412,290 405,275 380,262 355,240 340,220 320,208 298,202 270,198 245,198 225,210 205,222 175,232 198,215 190,208 160,208 145,198 135,188 160,178 150,172 138,160 168,154 135,148" />
        <Line p="298,138 298,202 325,208 345,228 370,258 412,282" a={0.03} />
        <Line p="415,273 598,273" a={0} />
        <Line p="598,273 640,280 670,290 680,318 710,312 735,300 752,292 770,296" />
        <Line p="462,380 500,386 525,388 545,402 555,398 570,418 580,420" />
        <Line p="608,490 620,482 622,470 632,472 640,490" /><Line p="640,505 650,496 670,492" /><Line p="655,515 668,518" />
        <Land p="47,145 80,155 108,160 95,170 60,166 47,170" />
        <Land p="400,124 410,110 440,108 455,118 430,130" a={0.3} />
        <Land p="440,130 470,118 500,118 520,128 535,145 500,148 460,145" a={0.25} />
        <Land p="415,98 450,92 500,88 480,98 440,104" a={0.3} />
        <Land p="500,102 540,92 555,105 520,112" a={0.3} />
        <Land p="530,82 560,76 575,84 550,90" a={0.3} />
        <Land p="560,92 600,85 660,82 690,92 665,100 640,96 600,100" a={0.3} />
        <Land p="590,72 640,60 700,54 780,52 842,56 790,68 740,78 700,90 660,88 630,78" a={0.25} />
        <Land p="632,122 670,110 710,114 750,128 785,146 812,158 795,170 802,180 775,172 780,186 760,180 745,165 720,158 700,145 660,140" a={0.22} />
        <Land p="542,118 575,112 590,128 560,138 540,132" a={0.3} />
        <Land p="600,112 640,104 680,102 650,112 620,124" a={0.3} />
        <Land p="685,150 700,140 735,150 730,168 708,166 700,180 685,168" a={0.3} />
        <Land p="640,150 680,156 660,165 645,175" a={0.3} />
        <Rag p="415,100 470,88 500,86" w={5} /><Rag p="530,82 590,72 640,60 700,54 820,54" w={5} />
        <Rag p="600,72 660,62 740,66" w={8} /><Rag p="610,84 680,74 720,76" w={7} /><Rag p="640,98 690,94" w={6} />
        <Rag p="440,124 520,108 545,116 590,128" w={5} />
        <Rag p="465,148 515,156 560,150 595,136 600,112" w={6} /><Rag p="590,110 610,100 640,110" w={5} />
        <Rag p="650,122 740,134 800,158 812,160" w={5} /><Rag p="625,160 650,152 680,158" w={5} />
        <Rag p="325,208 345,226 372,255 415,280" w={12} />
        <Rag p="345,232 370,252 418,274" w={8} />
        <Rag p="225,208 190,228 160,236" w={5} /><Rag p="160,238 120,246 50,258" w={4.5} /><Rag p="245,198 215,210 205,222" w={7} />
        <Rag p="47,129 60,130" /><Rag p="60,160 108,162 135,178" w={5} />
        <Rag p="462,388 480,412 500,438" w={5} /><Rag p="722,345 716,368" w={6} />
        <Rag p="700,200 716,220 700,250" w={5} /><Rag p="775,276 825,264" w={5} /><Rag p="790,298 830,300" w={5} />
        <Land p="668,446 690,442 715,455 730,462 705,460 690,450" /><Land p="738,465 765,465 772,474 750,475" />
        <Rag p="705,420 722,435 750,452" w={4.5} /><Rag p="785,472 815,484 820,510" w={4} /><Rag p="735,474 770,474" w={5} />
        <Rag p="595,404 640,396 670,398" w={4.5} />
        <Dots p="92,198 110,222 60,408 98,424 112,482 445,403 492,466 468,470 505,523 650,553 618,592 628,596 790,380 160,555 178,565 188,578 100,610 204,628" />
        <Rag p="175,450 190,452 206,466" w={5} /><Rag p="618,592 634,600" w={7} />
      </G>
      <G x={675} y={185}>
        <Land p="-65,78 -40,64 0,58 60,52 130,50 200,52 240,62 298,63 260,72 245,85 255,100 235,115 235,130 190,145 150,160 115,168 100,185 92,203 60,195 45,180 35,160 22,130 0,105 -30,98 -70,90" />
        <Rag p="248,66 240,90 245,100" w={10} /><Rag p="240,100 230,120 190,132" w={9} /><Rag p="190,120 225,112" w={5} /><Rag p="12,118 34,138 38,175 60,195 92,203" w={9} /><Rag p="28,130 42,160" w={6} /><Rag p="0,60 80,56 200,50" w={5} />
        <Land p="218,165 235,160 280,162 284,172 250,182 232,178" a={0.2} />
        <Land p="442,74 480,72 545,72 520,82 500,84 482,95 465,84" a={0.25} /><Rag p="445,78 500,74 545,72" w={7} /><Rag p="545,76 610,70" w={4} />
        <Rag p="665,68 720,70 760,66 795,66" w={6} /><Rag p="720,70 770,68" w={10} />
        <Rag p="405,196 425,180 455,162 485,145 520,136 570,134" w={9} />
        <Land p="405,190 420,180 450,165 480,145 515,135 550,132 575,138 610,145 640,155 635,165 605,162 585,160 605,172 632,178 645,160 665,155 680,147 710,150 740,142 770,140 810,147 812,126 845,120 850,146 830,160 848,155 870,130 910,112 960,100 1000,95 1040,92 1070,98 1110,98 1090,112 1140,115 1190,118 1210,125 1240,130 1280,120 1330,128 1380,132 1420,140 1470,142 1510,138 1540,142 1540,170 1525,172 1535,185 1500,190 1470,200 1435,202 1425,225 1410,240 1390,260 1384,240 1390,220 1410,203 1440,188 1410,195 1385,198 1360,207 1290,208 1255,235 1285,240 1290,260 1275,285 1260,300 1240,312 1210,318 1195,330 1210,350 1212,365 1200,368 1192,350 1180,335 1160,340 1145,330 1138,342 1165,350 1155,365 1165,385 1165,400 1150,425 1120,445 1090,455 1078,460 1060,455 1055,465 1050,470 1065,485 1080,500 1078,520 1055,530 1045,535 1040,520 1025,515 1015,520 1022,540 1035,555 1050,580 1050,597 1032,578 1022,555 1013,530 1012,500 1005,485 990,490 982,475 970,455 960,450 945,450 940,460 915,475 895,490 890,515 875,538 860,520 848,490 845,455 830,455 825,440 810,430 770,428 740,425 735,430 710,420 700,405 688,395 690,410 705,425 715,435 740,432 745,440 760,445 745,470 720,490 690,500 655,508 650,495 630,460 610,425 596,402 603,385 605,362 600,352 570,355 545,355 530,345 525,330 545,352 530,348 518,335 505,320 495,318 490,305 470,295 460,300 475,315 490,325 480,330 478,343 468,335 455,320 435,310 410,312 390,320 372,345 345,358 330,355 316,348 320,312 365,312 362,290 345,275 370,268 400,260 425,240 425,225 435,215 442,235 460,235 500,238 525,235 520,215 550,205 570,200 540,202 515,195 520,180 535,167 515,170 490,185 490,200 500,205 485,220 470,232 460,215 450,200 430,212 408,210" a={0.12} />
        <Sea p="556,312 565,298 585,290 600,298 630,305 658,318 640,322 600,315 575,322" />
        <Sea p="680,300 700,290 715,295 705,305 722,330 720,350 700,348 695,325" />
        <Sea p="594,400 600,408 612,420 630,455 652,495 645,500 625,470 600,425" />
        <Land p="310,240 330,232 332,248 312,255" /><Land p="340,210 358,205 355,220 368,240 382,248 378,262 345,266 352,255 345,240" a={0.15} /><Rag p="330,218 350,207 368,198" w={6} /><Rag p="328,186 332,190" w={8} /><Rag p="328,222 345,232" w={8} />
        <Land p="710,125 740,105 790,95 850,90 800,100 760,110 735,132 715,130" />
        <Rag p="658,156 700,150 770,140" w={6} /><Rag p="585,158 650,162" w={5} />
        <Line p="452,200 455,182 480,160 500,148 525,145 550,140 570,140" /><Line p="528,165 520,150" /><Line p="565,140 575,180 565,198" /><Line p="545,205 555,222 530,225" />
        <Line p="425,240 415,262 420,278 440,282" /><Line p="400,258 420,262" /><Line p="468,238 470,258 455,265 440,282 455,285" /><Line p="470,262 495,268 525,265 530,238" /><Line p="525,240 545,230 575,232 585,240 570,255 530,252" /><Line p="523,268 520,282 545,282 560,298" /><Line p="572,255 600,258 632,270 630,285 605,295" />
        <Line p="320,320 332,322 326,350" /><Line p="365,312 392,316" /><Line p="392,316 400,295 412,290 440,285 470,290 500,275 520,282" /><Line p="412,295 420,305 455,292 462,302" /><Line p="470,290 480,305 500,300 505,320" /><Line p="500,282 515,300 545,308 560,304" /><Line p="510,300 512,320 545,318" /><Line p="495,292 500,285 515,280" />
        <Line p="455,285 480,280 500,275" /><Line p="455,268 480,276 510,268" /><Line p="480,305 495,312 510,308" /><Line p="500,200 510,212 535,212 552,215" />
        <Line p="545,320 600,322 655,318" />
        <Line p="655,318 670,330 660,340 665,348 630,352 605,358" /><Line p="670,322 690,330 700,340" /><Line p="630,352 625,372 610,385" /><Line p="665,348 680,370 683,392 690,398" /><Line p="605,388 625,380 650,395 683,392" /><Line p="655,500 660,485 690,480 720,460 735,440" /><Line p="710,470 720,490" />
        <Line p="720,342 740,338 775,355 770,380 778,400 776,426" /><Line p="680,285 680,265 715,255 745,262 770,255 768,242 810,235 850,240 880,252 945,275" /><Line p="720,320 740,320 738,300 765,302 800,315 830,328 880,318 900,300 945,275" /><Line p="738,320 775,330 795,345" /><Line p="775,355 800,345 830,350 850,345" /><Line p="778,400 810,385 835,365 850,350" /><Line p="830,328 855,342 860,358 880,370" />
        <Line p="945,275 975,265 1010,268 1015,255 1060,262 1100,268 1130,272 1150,282 1145,290 1110,302 1080,318 1050,322 1010,315 970,300 960,282 945,275" /><Line p="1130,272 1155,245 1190,248 1205,270 1225,280 1245,280 1235,300 1212,318" /><Line p="1192,332 1180,330" />
        <Line p="830,438 840,415 865,390 870,365 855,358" /><Line p="880,370 890,390 920,408 945,412 970,405 1000,402" /><Line p="895,398 925,405 942,418 920,412 893,400" /><Line p="942,418 950,445 960,450" /><Line p="945,412 970,415 968,435 958,445" /><Line p="975,475 970,450 985,415 1000,402 1015,430 1012,448 1035,445 1060,442 1065,458" /><Line p="1012,448 1005,470 1012,495" /><Line p="1025,450 1045,470 1050,490 1065,500 1055,522" /><Line p="1015,465 1040,470" /><Line p="1030,500 1050,498" /><Line p="1022,560 1040,560" /><Line p="1040,520 1030,505" />
        <Line p="605,362 603,400" /><Line p="1240,312 1220,318 1190,322" />
        <Rag p="815,325 850,328" w={6} /><Rag p="525,335 545,355" w={9} /><Rag p="540,330 545,345" w={7} /><Rag p="465,300 500,315 515,330" w={6} /><Rag p="378,338 395,330" w={5} /><Land p="450,342 472,345 465,352" /><Land p="428,318 438,318 436,336 428,334" /><Rag p="575,362 598,362" w={6} />
        <Rag p="425,228 455,225" w={8} /><Rag p="540,362 560,360" w={5} /><Rag p="488,212 510,205" w={5} />
        <Rag p="256,405 290,405" w={4.5} /><Rag p="170,335 212,348" w={4} /><Rag p="208,482 225,490" w={5} /><Dots p="315,130 262,376 270,378 180,586 60,505 780,292 733,618 162,617" />
        <Rag p="1050,458 1090,452 1120,444 1150,424" w={5} /><Rag p="1185,325 1208,362" w={7} /><Rag p="940,458 960,440" w={8} />
        <Rag p="910,112 1000,96 1070,98" w={5} /><Rag p="1140,116 1200,120" w={5} />
      </G>
      <G x={945} y={185}>
        <Rag p="150,68 200,72 215,80" w={7} /><Rag p="215,80 260,92 300,98" w={6} /><Rag p="90,105 130,104" w={7} /><Rag p="440,102 500,100 540,104" w={5} /><Rag p="470,120 520,124" w={6} /><Rag p="40,125 100,130" w={6} />
        <Land p="483,238 492,255 495,275 500,290 488,285 486,260" /><Land p="485,305 505,305 512,312 490,318" /><Land p="475,318 485,335 480,355 460,362 430,372 412,375 440,360 460,350 468,335" a={0.18} /><Rag p="410,376 430,370 480,358" w={7} /><Land p="404,378 416,378 414,395 406,390" />
        <Rag p="515,300 560,280 590,262" w={5} /><Rag p="408,395 392,425 360,432" w={4} /><Rag p="468,365 475,405 485,430" w={3} /><Rag p="500,455 510,480 500,510" w={3} />
        <Land p="340,432 352,430 350,445" /><Land p="270,460 282,458 278,472 268,470" /><Land p="80,532 92,535 95,550 82,550" /><Rag p="640,235 660,236" w={5} /><Rag p="685,250 730,256" w={5} /><Rag p="605,138 670,142" w={5} /><Rag p="625,190 600,225 590,248" w={5} />
        <Dots p="0,92 62,74 58,78 78,66 550,90 582,93 645,90 725,128 561,432 642,465 459,530 432,545 489,541 512,541 588,545 652,530 675,532 700,545 655,560 685,575 690,590 705,605 712,610 566,582 30,520 38,540 36,560 38,590" />
        <Rag p="165,500 168,530 180,545" w={4} /><Rag p="352,458 354,490" w={5} /><Rag p="200,480 203,530" w={6} />
      </G>
      <G x={750} y={280}>
        <Land p="105,78 140,75 180,68 212,66 220,80 215,92 240,100 275,110 285,97 310,98 345,102 370,105 378,118 365,118 385,150 405,190 425,225 435,237 480,228 478,250 450,290 420,320 405,345 412,375 412,400 380,430 378,465 355,485 335,510 305,528 270,532 255,490 245,450 225,418 235,385 232,345 208,318 208,290 205,270 180,265 165,275 130,270 100,278 80,265 60,245 40,225 42,205 40,170 60,135 88,112" a={0.07} />
        <Line p="137,78 140,95 95,120 90,132 175,182 225,155 250,158 303,178 310,175 310,98" a={0.04} /><Line p="212,68 200,88 215,105 215,135 225,155" /><Line p="310,162 388,162" a={0} /><Line p="42,168 65,165 68,142 92,138 90,130" a={0.05} /><Line p="108,142 112,205 70,205 62,215 45,202" a={0.02} />
        <Line p="112,205 115,225 130,232 150,210 175,205 175,182" /><Line p="250,158 248,195 238,220 175,220 165,225 155,212" /><Line p="303,178 300,210 295,232 245,255 240,225" /><Line p="388,162 400,185" /><Line p="295,232 310,250 355,240 372,235 388,205 398,190" /><Line p="388,200 410,215 428,232" /><Line p="372,235 370,255 385,280 412,282 440,270 470,248 465,240 435,238" /><Line p="412,282 418,318" />
        <Line p="310,250 325,275 350,285 385,280" /><Line p="245,255 245,280 275,278 325,275" /><Line p="240,225 240,240 220,262 208,265" /><Line p="210,292 240,292 245,280" /><Line p="222,330 245,320 240,295" /><Line p="232,340 255,330 265,300 270,280" /><Line p="230,345 252,345 258,358 288,352 295,385 330,395 345,390 332,380 335,362 340,330 345,310 350,285" /><Line p="345,312 372,310 372,285" /><Line p="372,312 405,338" /><Line p="335,362 365,370 375,380 410,378" /><Line p="228,418 300,420 292,390 295,385" a={0.03} /><Line p="300,420 325,415 345,400 375,395 365,372" /><Line p="325,418 340,405 362,410 360,440 345,450 330,435 320,420" /><Line p="375,395 382,410 370,400" /><Line p="300,422 285,425 282,475 272,490 255,490" /><Line p="282,472 310,470 330,452 352,452 358,480" /><Line p="324,498 332,492 338,500 330,506 324,498" /><Line p="350,478 358,474 356,484 350,480" />
        <Line p="165,272 170,245 165,225" /><Line p="155,275 158,240 150,232" /><Line p="130,270 130,240 155,235" /><Line p="100,276 98,240 75,235 50,235" /><Line p="62,250 72,245 80,255 72,262" /><Line p="98,240 130,238" /><Line p="45,215 75,210 80,235" /><Rag p="42,222 52,230" w={10} /><Line p="340,318 350,325 345,335" />
        <Land p="470,388 475,405 462,435 450,468 436,470 430,450 438,415 455,408" /><Rag p="428,380 442,388" w={5} /><Rag p="485,228 500,226" w={4.500} /><Dots p="508,334 515,350 515,372 508,442 522,436 558,433 408,450 55,356 110,408 190,300 184,316 68,546 84,567 448,365" />
      </G>
      <G x={395} y={385}>
        <Land p="712,-62 745,-82 770,-85 820,-75 850,-45 880,-30 895,0 925,5 960,15 988,35 985,60 965,80 960,120 940,140 900,160 895,185 865,215 840,220 845,235 810,245 795,260 790,280 775,290 785,300 765,325 772,345 740,335 725,310 725,285 738,260 745,210 757,150 760,110 725,90 705,50 688,15 690,-10 708,-35" a={0.07} />
        <Line p="745,-80 742,-55 775,-45 778,-15 765,-5 762,18" /><Line p="775,-45 780,-18 800,-15 810,-35 825,-40 840,-52" /><Line p="825,-40 835,-12 855,-18 875,-28" /><Line p="690,12 705,18 730,5 762,18 738,40 740,58 762,62" /><Line p="695,-10 715,-10 730,5" /><Line p="762,62 790,55 800,75 838,98 838,118 810,130 775,138 762,110 768,85 762,62" /><Line p="775,138 762,180 755,230 745,270 745,320 770,330" /><Line p="810,130 815,145 840,155 858,165 865,150 850,135 838,118" /><Line p="858,165 842,190 835,215" /><Line p="842,188 868,205" />
        <Line p="855,-18 855,5 880,2" />
        <Rag p="736,265 728,300 735,322 752,338 785,350" w={13} /><Rag p="740,270 734,305 765,342" w={9} /><Rag p="815,326 838,327" w={8} /><Rag p="785,350 800,347" w={5} /><Rag p="875,0 900,3" w={8} />
        <Rag p="230,98 270,92 300,105 330,128" w={4} /><Rag p="255,92 285,100" w={4} /><Rag p="55,98 52,128" w={4} /><Rag p="90,80 115,88" w={3} /><Rag p="80,130 84,110" w={3} /><Rag p="175,122 195,130" w={4} /><Rag p="303,45 315,58" w={4.500} /><Rag p="360,148 382,154" w={3} /><Rag p="968,340 988,348" w={4.500} /><Rag p="1035,355 1042,375" w={3} /><Rag p="80,18 105,12" w={3} />
        <Dots p="85,28 205,20 140,62 165,85 60,180 66,275 190,55 275,170 502,166 695,160 690,210 700,208 625,437 1005,14 1120,42 1176,96 1022,124 1133,232 1148,252 940,338 918,384 210,98 240,112 310,155 325,140 230,65" />
        <Land p="47,538 120,540 200,536 85,530 150,535 225,522 200,512 255,512 195,500 150,505 190,492 260,490 300,482 380,475 460,475 550,478 575,470 550,462 620,465 700,470 760,468 780,450 775,430 800,430 820,445 815,470 780,480 720,488 670,500 700,515 760,512 800,520 830,530 900,522 960,520 1010,510 1060,510 980,500 1010,488 1090,478 1130,460 1200,452 1400,450 1430,438 1470,445 1500,432 1560,420 1600,430 1665,432 1662,445 1645,465 1690,450 1740,432 1800,422 1880,418 1940,425 2040,422 2100,422 2180,435 2250,442 2320,458 2270,480 2275,495 2305,495 2250,515 2260,525 2320,535 2380,538 2380,574 47,574" a={0.03} />
        <Land p="862,515 885,500 910,496 932,508 900,514" /><Line p="47,542 203,543" a={0} /><Line p="1010,510 1062,510" a={0} />
        <Land p="720,452 745,440 770,448 768,462 740,464" a={0.25} />
        <Rag p="770,430 790,415 820,402 855,402" w={7} /><Rag p="790,412 835,397 860,388" w={5} /><Rag p="720,455 760,445 775,455" w={6} /><Rag p="820,440 822,470" w={6} /><Rag p="380,472 440,470 500,474" w={5} /><Rag p="545,464 600,462 640,466" w={6} /><Rag p="235,492 270,488" w={9} /><Rag p="150,507 175,506" w={5} /><Rag p="185,520 215,525" w={5} /><Rag p="675,500 700,502 740,508" w={5} /><Rag p="760,505 815,518" w={6} /><Rag p="1070,478 1140,460 1200,452" w={4.500} /><Rag p="1220,450 1390,448" w={5} /><Rag p="1560,420 1590,426" w={4.500} /><Rag p="1760,425 1880,417 1950,424" w={4.500} /><Rag p="2180,435 2320,458" w={4.500} /><Rag p="2272,485 2305,495" w={5} /><Rag p="2242,512 2262,520" w={8} /><Rag p="2270,422 2290,430" w={4} />
      </G>
      <G x={980} y={320}>
        <Land p="195,330 245,315 252,298 270,285 300,280 310,262 330,268 345,265 342,285 365,300 375,285 380,252 388,262 395,280 410,305 432,325 452,350 452,385 435,425 425,437 390,435 365,430 350,410 345,415 320,395 290,395 240,408 208,412 203,380 192,350" />
        <Land p="395,445 420,448 418,465 405,468" /><Land p="580,408 600,430 615,432 605,450 592,450 595,435" /><Land p="588,450 575,470 545,488 540,482 560,468 575,455" />
        <Land p="75,148 95,158 120,185 145,208 145,225 125,215 100,185" /><Land p="168,180 185,178 210,165 225,148 232,155 222,172 225,190 215,210 180,205 168,195" /><Line p="170,180 200,178 215,160 228,160" /><Land p="145,226 180,228 225,238 225,244 175,238 145,232" a={0.15} /><Land p="310,190 330,198 350,200 375,205 400,215 420,235 440,250 410,245 395,235 375,245 360,235 355,215 330,215" a={0.14} /><Line p="373,204 373,245" a={0} />
        <Land p="240,60 250,62 248,90 262,105 258,98 250,110 240,90" /><Land p="258,125 272,118 278,135 270,145 262,138" a={0.2} /><Land p="235,195 245,185 265,182 250,195 255,215 245,225 242,210 235,215" a={0.2} /><Land p="430,215 455,205 445,222" />
        <Rag p="82,160 110,193 130,215" w={5} /><Rag p="98,90 97,118 112,145" w={5} /><Rag p="110,150 128,175" w={6} /><Rag p="252,92 265,105 275,125" w={10} /><Rag p="245,105 262,120" w={7} /><Rag p="225,242 260,248 310,235" w={7} /><Rag p="145,225 225,240" w={5} /><Rag p="210,165 235,135 250,120" w={4.500} /><Rag p="285,170 292,200 320,204" w={7} /><Rag p="238,190 265,182" w={6} /><Rag p="265,188 285,205 310,208" w={5} /><Rag p="310,190 345,200" w={7} /><Rag p="320,208 335,218" w={6} /><Rag p="315,262 345,262" w={5} /><Rag p="455,208 480,235 510,250" w={7} /><Rag p="430,215 458,208" w={6} /><Rag p="540,255 547,275" w={4} /><Rag p="545,278 550,300 558,315" w={6} /><Rag p="520,315 548,330" w={5} /><Rag p="608,295 625,300" w={9} /><Rag p="580,410 600,428" w={5} /><Rag p="60,90 62,130" w={4} /><Rag p="402,52 400,95" w={3} /><Rag p="430,245 460,258" w={5} /><Rag p="415,310 452,350" w={5} /><Rag p="550,145 575,150 590,190" w={3} /><Rag p="347,400 353,415" w={8} /><Rag p="160,180 140,180" w={4} />
        <Dots p="85,264 180,70 190,120 330,138 325,150 378,44 310,12 455,28 485,140 430,140 515,152 460,162 463,175 568,128 615,238 595,325 545,374 490,390 618,508 540,480 525,510 130,180 155,190 230,230 375,60" />
      </G>
    </svg>
  );
}

/* ---------- status bar ---------- */
function Status() {
  const t = "shrink-0 whitespace-nowrap font-['Noto_Sans'] text-[12.500px] text-black ";
  return (
    <div className="flex h-[29px] shrink-0 items-center bg-[#f0f0f0] pb-[5px]">
      <div className="ml-[5px] flex h-[22px] w-[283px] shrink-0 items-center rounded-[2px] border border-[#bbb] bg-white pl-[7px]">
        <svg viewBox="0 0 12 12" className="size-[13px]" fill="none" stroke="#888"><circle cx="5" cy="5" r="4" /><path d="M8 8l3.500 3.500" /></svg>
        <span className="ml-[8px] whitespace-nowrap font-['Noto_Sans'] text-[12.500px] tracking-[0.080px] text-[#808080]">Type to locate (Ctrl+K)</span>
      </div>
      <span className={t + "ml-[12px] w-[66px] tracking-[-0.300px]"}>Coordinate</span>
      <span className={t + "flex h-[22px] w-[93px] items-center justify-end rounded-[2px] border border-[#74a9d8] bg-white pr-[12px]"}>-173.6,88.9<i className="ml-px h-[15px] w-px bg-black" /></span>
      <Cell w="w-[27px]"><I c="size-[19px]"><path d="M2 5l6 9M7 1l5 9M1 9l6 7" stroke="#111" strokeWidth="3" /><path d="M7 12c3-4 12-3 14 2s-3 9-8 8-8-5-6-10z" fill="#eee" stroke="#111" strokeWidth="2" /><circle cx="14" cy="16" r="3.500" stroke="#111" strokeWidth="2" /><path d="M16 3l6-2M18 7l4-1M3 20l-2 2" stroke="#333" strokeDasharray="2 1.500" strokeWidth="1.500" /></I></Cell>
      <span className={t + "ml-[10px] w-[34px]"}>Scale</span>
      <span className={t + "flex h-[22px] w-[93px] items-center justify-between rounded-[2px] border border-[#bbb] bg-white pl-[1px] tracking-[-0.1px]"}>233183904<span className="flex h-full w-[25px] items-center justify-center bg-[#f5f5f5] pr-[4px]"><Tri /></span></span>
      <Cell w="w-[42px]"><I c="h-[19px] w-[19px]"><path d="M6.500 12V7c0-7 11-7 11 0v5" stroke="#777" strokeWidth="2.500" /><rect x="3" y="10" width="18" height="13" rx="2" fill="#666" /></I></Cell>
      <span className={t + "-ml-[5px] w-[57px] tracking-[-0.350px]"}>Magnifier</span>
      <Spin w="w-[93px]">100%</Spin>
      <span className={t + "ml-[9px] w-[56px] tracking-[-0.200px]"}>Rotation</span>
      <Spin w="w-[88px]">0.0 °</Spin>
      <span className="ml-[7px]"><Check /></span>
      <span className={t + "ml-[6px] w-[59px] tracking-[-0.200px]"}>Render</span>
      <svg viewBox="0 0 20 18" className="h-[18px] w-[20px] shrink-0" fill="none" stroke="#777"><ellipse cx="10" cy="9" rx="8" ry="8" /><ellipse cx="10" cy="9" rx="4" ry="8" /><path d="M0 7h20M2 11.500h16M10 1v16M3.500 4h13" strokeWidth="1.300" /></svg>
      <span className={t + "ml-[3px] w-[83px] tracking-[-0.100px]"}>EPSG:4326</span>
      <svg viewBox="0 0 20 18" className="h-[18px] w-[20px] shrink-0"><ellipse cx="10" cy="8" rx="10" ry="7.500" fill="#666" /><path d="M10 14h6l2 4z" fill="#666" /><g fill="#fff"><circle cx="6" cy="7.500" r="1.400" /><circle cx="10" cy="7.500" r="1.400" /><circle cx="14" cy="7.500" r="1.400" /></g></svg>
    </div>
  );
}

/* ---------- overlays ---------- */
const Frame = ({ at }) => <div className={"pointer-events-none absolute border-[3px] border-[#b5142b] shadow-[inset_0_0_0_1px_#f3bcc5] outline outline-1 outline-[#f0b0bb] " + at} />;
const Badge = ({ at, children }) => <div className={"absolute flex size-[43px] items-center justify-center rounded-full bg-[#fe0000] pb-[1px] font-['Liberation_Sans'] text-[30px] leading-none text-white [-webkit-text-stroke:0.5px_white] " + at}>{children}</div>;

const menu = [
  ["w-[61px]", "Pro", "j", "ect"], ["w-[41px]", "", "E", "dit"], ["w-[47px]", "", "V", "iew"], ["w-[50px]", "", "L", "ayer"], ["w-[68px]", "", "S", "ettings"],
  ["w-[62px]", "", "P", "lugins"], ["w-[57px]", "Vect", "o", "r"], ["w-[56px]", "", "R", "aster"], ["w-[77px]", "", "D", "atabase"], ["w-[46px]", "", "W", "eb"],
  ["w-[50px]", "", "M", "esh"], ["w-[40px]", "SCP", "", ""], ["w-[85px]", "Pro", "c", "essing"], ["w-[40px]", "", "H", "elp"],
];

export default function App() {
  return (
    <div className="relative flex h-[633px] w-[1211px] flex-col overflow-hidden bg-[#f0f0f0] font-['Noto_Sans',sans-serif]">
      <header className="flex h-[37px] shrink-0 items-center bg-white pl-[9px]">
        <svg viewBox="0 0 22 22" className="mt-[2px] size-[21px]" fill="none"><path d="M16.500 16.500A8 8 0 1 1 18 6.500q1.500 3 0 6.500" stroke="#6fa234" strokeWidth="4.200" /><path d="M10 10h4l7 8v3h-4l-7-7z" fill="#7bab35" /><path d="M8.500 8.500h4v4h-4z" fill="#ee7913" /></svg>
        <span className="ml-[5px] mt-[2px] text-[14px] tracking-[0.020px] text-black">GIS4SCHOOLS - QGIS</span>
        <div className="ml-auto flex items-center pr-[26px]">
          <svg viewBox="0 0 129 13" className="h-[13px] w-[129px]" fill="none" stroke="#000" strokeWidth="1.100"><path d="M0 6h13M58.500 .5h11v11h-11zM117 .5l11.500 12M128.500 .5L117 12.500" /></svg>
        </div>
      </header>
      <nav className="flex h-[25px] shrink-0 items-center pl-[12px] text-[14px] tracking-[-0.100px] text-black">
        {menu.map(([w, a, b, c]) => <span key={a + b + c} className={"shrink-0 whitespace-nowrap " + w}>{a}<u className="underline-offset-2">{b}</u>{c}</span>)}
      </nav>
      <RowOne />
      <RowTwo />
      <RowThree />
      <main className="flex h-[425px] shrink-0">
        <SideBar />
        <Layers />
        <WorldMap />
      </main>
      <Status />

      <div className="absolute left-0 top-0 h-full w-px bg-[#808080]" />
      <div className="absolute right-0 top-0 h-full w-[2px] bg-[#8b8d94]" />
      <Frame at="left-[2px] top-[37px] h-[25px] w-[793px]" />
      <Frame at="left-[2px] top-[64px] h-[115px] w-[1204px]" />
      <Frame at="left-[52px] top-[223px] h-[380px] w-[329px]" />
      <Frame at="left-[394px] top-[183px] h-[419px] w-[810px]" />
      <Frame at="left-[2px] top-[603px] h-[29px] w-[1195px]" />
      <Badge at="left-[783px] top-[9px]">1</Badge>
      <Badge at="left-[1165px] top-[64px]">2</Badge>
      <Badge at="left-[336px] top-[223px]">3</Badge>
      <Badge at="left-[1158px] top-[183px]">4</Badge>
      <Badge at="left-[224px] top-[587px]">5</Badge>
    </div>
  );
}
